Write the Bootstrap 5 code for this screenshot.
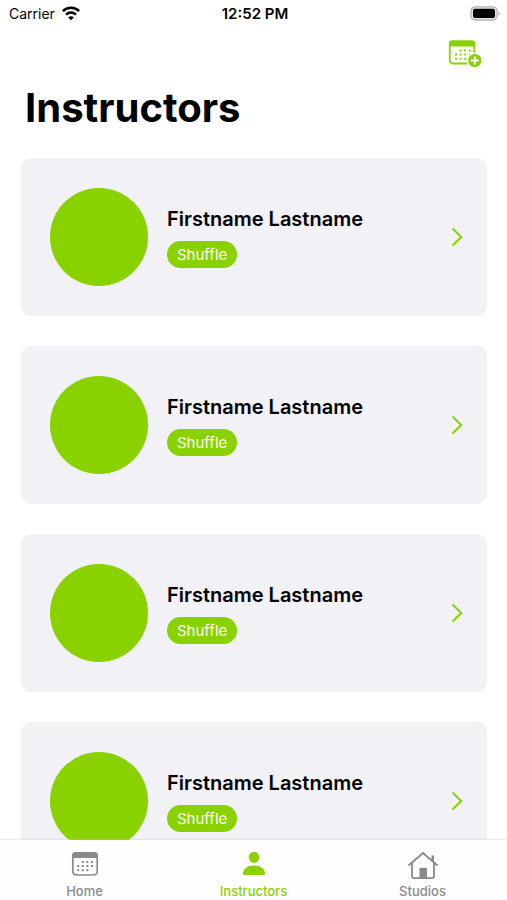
<!DOCTYPE html>
<html lang="en">
<head>
<meta charset="utf-8">
<meta name="viewport" content="width=device-width, initial-scale=1">
<title>Instructors</title>
<link href="https://cdn.jsdelivr.net/npm/bootstrap@5.3.0/dist/css/bootstrap.min.css" rel="stylesheet">
<style>
  :root { --accent: #8ad100; --muted: #8a8a8a; }
  body { font-family: Inter, "Liberation Sans", sans-serif; color: #000; background: #fff; }
  svg { display: block; flex: none; }
  .status-bar { font-size: 14px; line-height: 28px; padding: 0 6px 0 9px; }
  .status-bar > div { flex: 1 1 0; }
  .status-bar .wifi { margin-left: 6px; }
  .status-time { font-size: 15px; font-weight: 600; }
  .toolbar-row { height: 52px; padding: 10px 25px 0 0; }
  .accent { color: var(--accent); }
  .page-title { font-size: 40px; line-height: 50px; font-weight: 700; margin: 5px 0 25px 4px; }
  .page-body { padding: 0 20px 0 21px; }
  .instructor-list { gap: 30px; }
  .instructor { background: #f1f1f6; border-radius: 10px; padding: 30px 24px 30px 29px; gap: 19px; }
  .instructor, .instructor:hover { color: #000; }
  .avatar { width: 98px; height: 98px; background: var(--accent); flex: none; }
  .instructor-name { font-size: 20px; line-height: 26px; font-weight: 600; margin-bottom: 9px; }
  .tag { font-size: 15px; line-height: 27px; padding: 0 10px; color: #fff; background: var(--accent); }
  .tab-bar { background: #fefefe; box-shadow: 0 0 2px #c8c8cc; height: 60px; }
  .tab { font-size: 13px; line-height: 16px; font-weight: 500; color: var(--muted); padding-top: 9px; }
  .tab svg { margin-bottom: 4px; }
  .tab.active { color: var(--accent); }
</style>
</head>
<body>
<svg width="0" height="0" class="position-absolute" aria-hidden="true">
  <symbol id="chevron" viewBox="0 0 12 20"><path d="M1.500 1.500 10.300 10 1.500 18.500" fill="none" stroke="currentColor" stroke-width="2"/></symbol>
</svg>
<div class="vh-100 d-flex flex-column overflow-hidden">
  <header class="status-bar d-flex align-items-center">
    <div class="d-flex align-items-center">
      <span>Carrier</span>
      <svg class="wifi" width="20" height="16" viewBox="0 0 20 16" fill="none" stroke="#000" stroke-width="2.500" role="img" aria-label="Wi-Fi"><path d="M1.900 5.200a11.500 11.500 0 0 1 16.200 0M5 8.700a7 7 0 0 1 10 0"/><path d="M10 14.300 7.200 11.500a4 4 0 0 1 5.600 0z" fill="#000" stroke="none"/></svg>
    </div>
    <span class="status-time">12:52 PM</span>
    <div class="d-flex justify-content-end">
      <svg width="31" height="16" viewBox="0 0 31 16" role="img" aria-label="Battery full"><rect x="1" y=".8" width="26" height="13.200" rx="4" fill="#e4e4e4" stroke="#b4b4b4" stroke-width="1.300"/><rect x="3" y="2.800" width="22" height="9.200" rx="2" fill="#000"/><path d="M28.500 5q2.600 2.400 0 4.800z" fill="#b4b4b4"/></svg>
    </div>
  </header>
  <div class="toolbar-row d-flex justify-content-end align-items-start">
    <button type="button" class="btn p-0 border-0 accent" aria-label="Add class to calendar">
      <svg width="34" height="32" viewBox="0 0 34 32"><rect x="1.800" y="3.500" width="24.500" height="22" rx="3" fill="none" stroke="currentColor" stroke-width="1.800"/><path d="M1 8.500V5.500Q1 2.500 4 2.500h20q3.200 0 3.200 3v3z" fill="currentColor"/><g fill="none" stroke="currentColor" stroke-width="2" stroke-dasharray="2 2.600"><path d="M11.500 12.500h12M7 16.500h16.500M7 20.800h12"/></g><circle cx="26.800" cy="22.500" r="8" fill="#fff"/><circle cx="26.800" cy="22.500" r="6.600" fill="currentColor"/><path d="M22.800 22.500h8M26.800 18.500v8" stroke="#fff" stroke-width="1.900"/></svg>
    </button>
  </div>
  <main class="page-body flex-fill overflow-hidden">
    <h1 class="page-title">Instructors</h1>
    <div class="instructor-list d-flex flex-column">
      <a href="#" class="instructor d-flex align-items-center text-decoration-none">
        <span class="avatar rounded-circle"></span>
        <span class="d-flex flex-column align-items-start flex-fill"><span class="instructor-name">Firstname Lastname</span><span class="tag rounded-pill">Shuffle</span></span>
        <svg class="accent" width="12" height="20"><use href="#chevron"/></svg>
      </a>
      <a href="#" class="instructor d-flex align-items-center text-decoration-none">
        <span class="avatar rounded-circle"></span>
        <span class="d-flex flex-column align-items-start flex-fill"><span class="instructor-name">Firstname Lastname</span><span class="tag rounded-pill">Shuffle</span></span>
        <svg class="accent" width="12" height="20"><use href="#chevron"/></svg>
      </a>
      <a href="#" class="instructor d-flex align-items-center text-decoration-none">
        <span class="avatar rounded-circle"></span>
        <span class="d-flex flex-column align-items-start flex-fill"><span class="instructor-name">Firstname Lastname</span><span class="tag rounded-pill">Shuffle</span></span>
        <svg class="accent" width="12" height="20"><use href="#chevron"/></svg>
      </a>
      <a href="#" class="instructor d-flex align-items-center text-decoration-none">
        <span class="avatar rounded-circle"></span>
        <span class="d-flex flex-column align-items-start flex-fill"><span class="instructor-name">Firstname Lastname</span><span class="tag rounded-pill">Shuffle</span></span>
        <svg class="accent" width="12" height="20"><use href="#chevron"/></svg>
      </a>
    </div>
  </main>
  <nav class="tab-bar row g-0 flex-shrink-0 position-relative" aria-label="Main">
    <a href="#" class="tab col d-flex flex-column align-items-center text-decoration-none">
      <svg width="28" height="30" viewBox="0 0 28 30"><rect x="1.800" y="4" width="24.400" height="22" rx="3.500" fill="none" stroke="currentColor" stroke-width="1.700"/><path d="M1 9V6.500Q1 3 4.500 3h19Q27 3 27 6.500V9z" fill="currentColor"/><g fill="none" stroke="currentColor" stroke-width="2" stroke-dasharray="2 2.600"><path d="M10.700 13h12M6.200 17h16.500M6.200 21.300h12"/></g></svg>
      <span>Home</span>
    </a>
    <a href="#" class="tab active col d-flex flex-column align-items-center text-decoration-none" aria-current="page">
      <svg width="28" height="30" viewBox="0 0 28 30" fill="currentColor"><ellipse cx="14" cy="8.300" rx="5.200" ry="5.600"/><path d="M3 24.500C3.400 19.500 7.500 16.500 14 16.500s10.600 3 11 8q0 1.500-1.500 1.500h-19Q3 26 3 24.500z"/></svg>
      <span>Instructors</span>
    </a>
    <a href="#" class="tab col d-flex flex-column align-items-center text-decoration-none">
      <svg width="32" height="30" viewBox="0 0 32 30" fill="none" stroke="currentColor" stroke-width="1.800"><path d="M1.500 16.500 16 4l14.500 12.500"/><path d="M5 14v13q0 2.100 2.100 2.100h17.800q2.100 0 2.100-2.100V14"/><path d="M12.500 29V19.500q0-.8.800-.8h5.900q.8 0 .8.800V29z" fill="currentColor" stroke="none"/><path d="M24.500 6.500h2.600v6.800l-2.600-2.200z" fill="currentColor" stroke="none"/></svg>
      <span>Studios</span>
    </a>
  </nav>
</div>
<script src="https://cdn.jsdelivr.net/npm/bootstrap@5.3.0/dist/js/bootstrap.bundle.min.js"></script>
</body>
</html>
